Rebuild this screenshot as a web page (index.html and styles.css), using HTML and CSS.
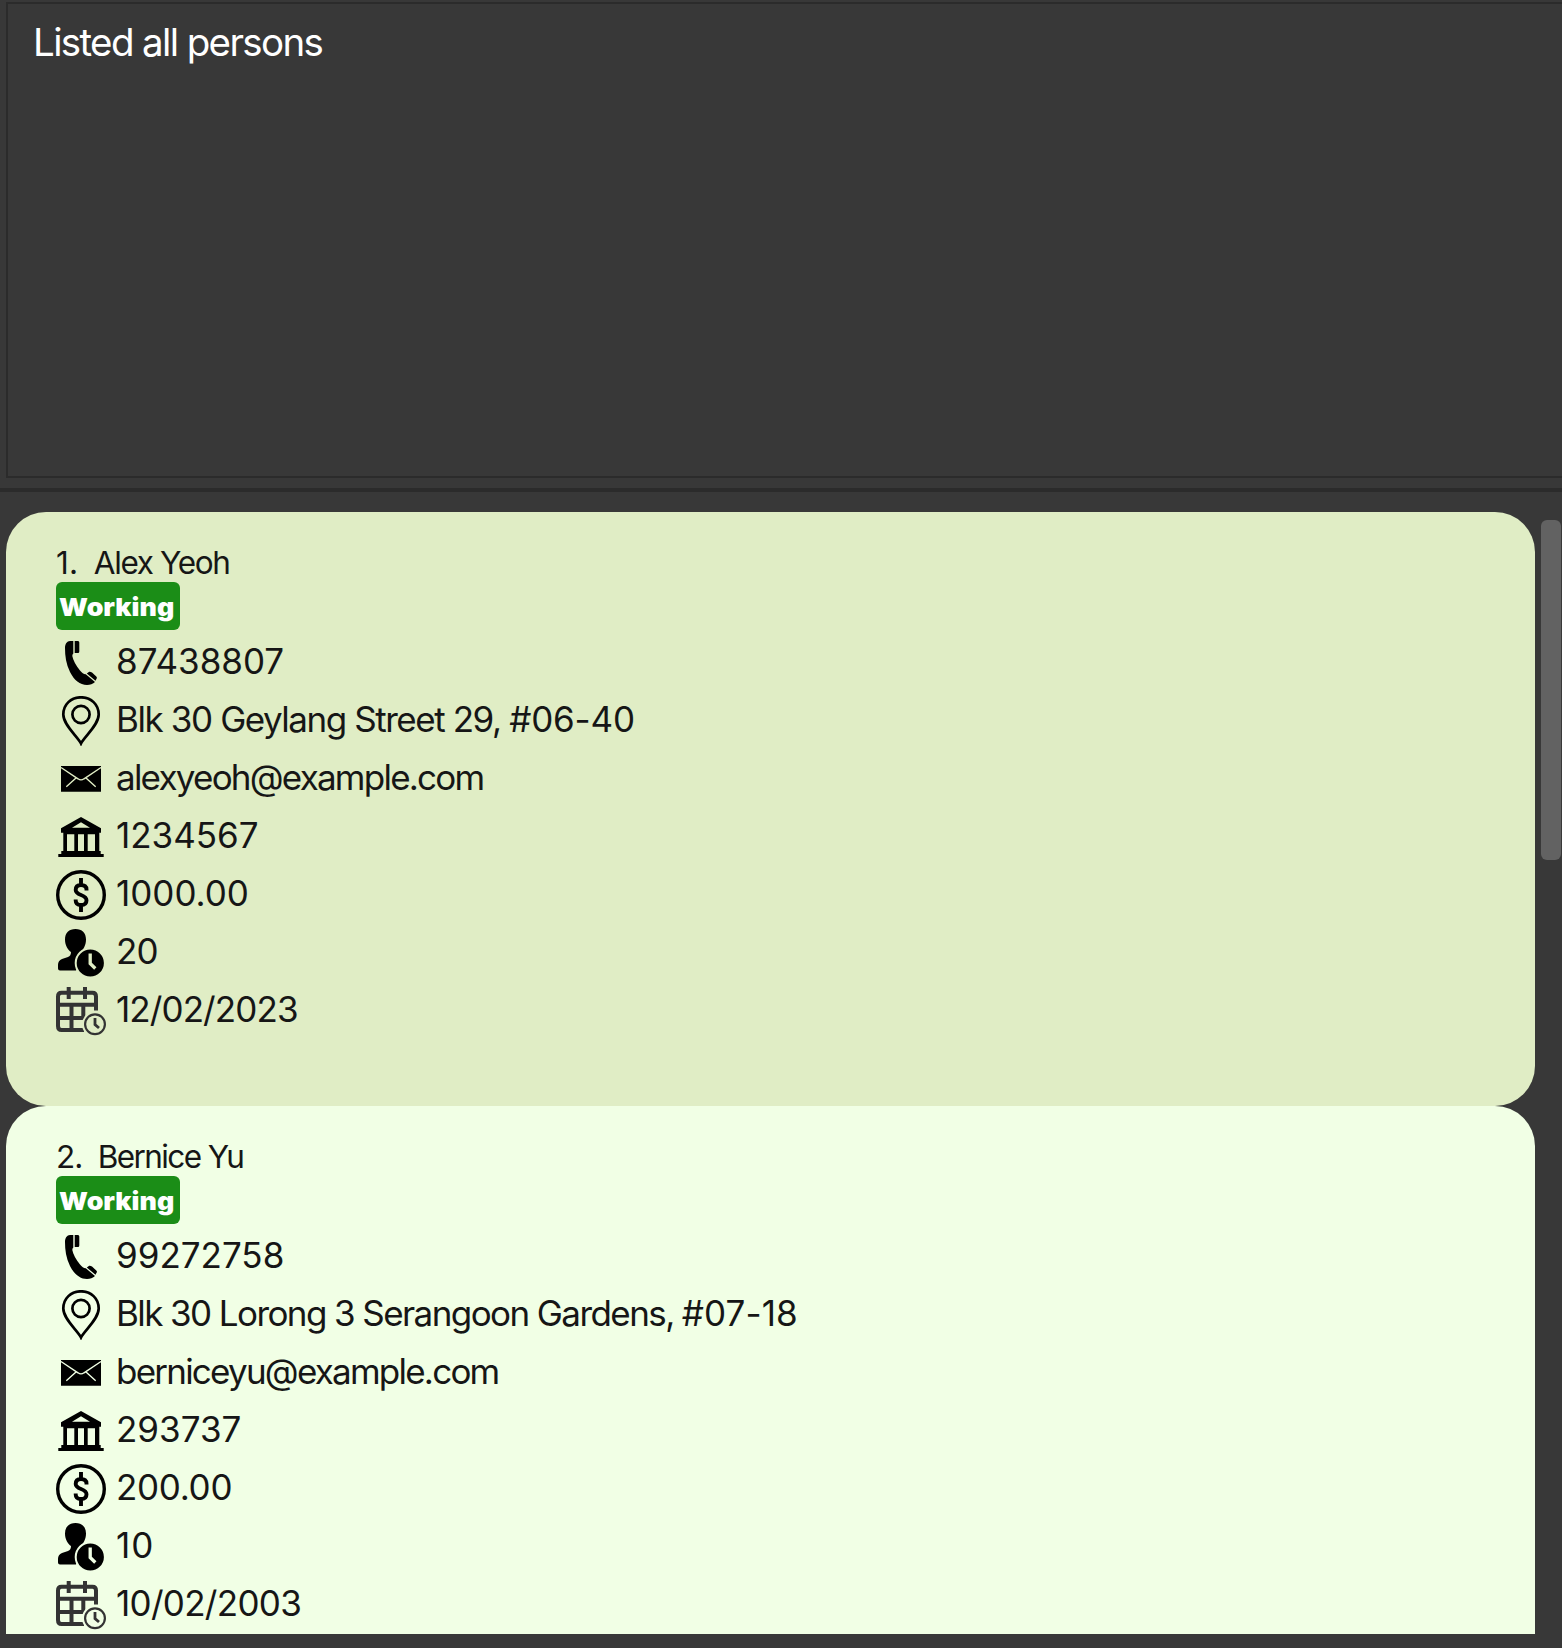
FILE: index.html
```html
<!DOCTYPE html>
<html lang="en">
<head>
<meta charset="utf-8">
<title>Persons</title>
<link rel="stylesheet" href="styles.css">
</head>
<body>
<svg class="sprite" width="0" height="0" aria-hidden="true">
  <symbol id="phone" viewBox="0 0 50 50">
    <path d="M17.3 3H14C11 3 9 6 9 10C9 18 10 26 14 34C18 42 24 47 31 47C34 47 37 46 39 44L29.800 36.300C28 36.500 26 35 24 32.500C20 27.500 17 22 16.300 18Q16.300 16 17.300 15.500Z"/>
    <path d="M18.700 3H22Q23.300 3 23.300 4.500V13.500Q23.300 15 22 15H18.700ZM30.800 35.500L33.200 33.800Q34.500 33.500 36 34.500L40.300 38.500Q41.300 39.500 40.700 40.500L39.500 42.800Z"/>
  </symbol>
  <symbol id="pin" viewBox="0 0 50 50">
    <g fill="none" stroke="#000" stroke-width="2.700">
      <path d="M25 47.500C22 41 7.300 29 7.300 18.500C7.300 8.500 15 1.300 25 1.300S42.700 8.500 42.700 18.500C42.700 29 28 41 25 47.500Z"/>
      <circle cx="25" cy="18.500" r="8.600"/>
    </g>
  </symbol>
  <symbol id="mail" viewBox="0 0 50 50">
    <path d="M5 12H45V37.700H5Z"/>
    <path d="M5 13.500L22 24.800Q25 27 28 24.800L45 13.500M10.300 32.700L20 24M39.700 32.700L30 24" fill="none" stroke="currentColor" stroke-width="1.400"/>
  </symbol>
  <symbol id="bank" viewBox="0 0 50 50">
    <path fill-rule="evenodd" d="M25 5L45 16.300V20.700H43.300V39H44.700V42H47.700V45H2.300V42H5.300V39H7.300V20.700H5V16.300ZM25 10.300L16 15.700H34ZM11 22.300V39H18.300V22.300ZM22 22.300V39H28V22.300ZM31.700 22.300V39H39V22.300Z"/>
  </symbol>
  <symbol id="dollar" viewBox="0 0 50 50">
    <g fill="none" stroke="#000">
      <circle cx="25" cy="25" r="23.300" stroke-width="3.400"/>
      <path d="M30.500 20.500V19.500C30.500 16.500 28.500 15 25 15S19.700 17 19.700 20C19.700 26 30.500 24 30.500 30.200C30.500 33.500 28.500 35 25 35S19.700 33.500 19.700 30.500V29.500M25 8V15M25 35V42" stroke-width="3.900"/>
    </g>
  </symbol>
  <symbol id="person" viewBox="0 0 50 50">
    <path d="M19.500 1C26 1 30 5 30 11.500C30 17.500 27 22 24.500 24V32L20 42.500H4Q2 42.500 2 40.500V37Q2 32.500 6 31L12 29Q15 28 15 24C12 22 9 17.500 9 11.500C9 5 13 1 19.500 1Z"/>
    <circle cx="34.300" cy="35" r="14.600" stroke="currentColor" stroke-width="2"/>
    <path d="M34.200 25.500V35.500L39.300 40.500" fill="none" stroke="currentColor" stroke-width="3.300"/>
  </symbol>
  <symbol id="calendar" viewBox="0 0 50 50">
    <g fill="none" stroke="#333">
      <path d="M40 24.500V10.500Q40 6.800 36.500 6.800H5.500Q2 6.800 2 10.500V40Q2 44 5.500 44H28M2 18.800H40M2 32H28M15.500 19V44M27.300 19V33" stroke-width="4"/>
      <path d="M12.700 1V13M29 1V13" stroke-width="4"/>
      <circle cx="39" cy="38.300" r="12" fill="currentColor" stroke="currentColor" stroke-width="2"/>
      <circle cx="39" cy="38.300" r="9.900" stroke-width="2.200"/>
      <path d="M39 32V38.500L43 42" stroke-width="2.800"/>
    </g>
  </symbol>
</svg>

<div class="result"><p class="result-text">Listed all persons</p></div>
<div class="divider"></div>

<main class="list">
  <div class="cards">
    <section class="card card-even">
      <h2 class="name"><span class="index">1.</span><span>Alex Yeoh</span></h2>
      <div class="tag"><span class="tag-label">Working</span></div>
      <ul class="fields">
        <li class="field"><svg class="icon"><use href="#phone"/></svg><span class="number">87438807</span></li>
        <li class="field"><svg class="icon"><use href="#pin"/></svg><span class="address">Blk 30 Geylang Street 29, <span class="unit">#06-40</span></span></li>
        <li class="field"><svg class="icon"><use href="#mail"/></svg><span class="email">alexyeoh@example.com</span></li>
        <li class="field"><svg class="icon"><use href="#bank"/></svg><span class="number">1234567</span></li>
        <li class="field"><svg class="icon"><use href="#dollar"/></svg><span class="number">1000.00</span></li>
        <li class="field"><svg class="icon"><use href="#person"/></svg><span class="hours">20</span></li>
        <li class="field"><svg class="icon"><use href="#calendar"/></svg><span class="date">12/02/2023</span></li>
      </ul>
    </section>
    <section class="card card-odd">
      <h2 class="name"><span class="index">2.</span><span>Bernice Yu</span></h2>
      <div class="tag"><span class="tag-label">Working</span></div>
      <ul class="fields">
        <li class="field"><svg class="icon"><use href="#phone"/></svg><span class="number">99272758</span></li>
        <li class="field"><svg class="icon"><use href="#pin"/></svg><span class="address">Blk 30 Lorong 3 Serangoon Gardens, <span class="unit">#07-18</span></span></li>
        <li class="field"><svg class="icon"><use href="#mail"/></svg><span class="email">berniceyu@example.com</span></li>
        <li class="field"><svg class="icon"><use href="#bank"/></svg><span class="number">293737</span></li>
        <li class="field"><svg class="icon"><use href="#dollar"/></svg><span class="salary">200.00</span></li>
        <li class="field"><svg class="icon"><use href="#person"/></svg><span class="hours">10</span></li>
        <li class="field"><svg class="icon"><use href="#calendar"/></svg><span class="date">10/02/2003</span></li>
      </ul>
    </section>
  </div>
  <div class="scroll-thumb"></div>
</main>
</body>
</html>
```
FILE: styles.css
```css
* { box-sizing: border-box; }

body {
  margin: 0;
  height: 1648px;
  overflow: hidden;
  display: flex;
  flex-direction: column;
  background: #383838;
  color: #161616;
  font-family: Inter, "Liberation Sans", sans-serif;
}

.sprite { display: none; }

.result {
  flex: none;
  height: 476px;
  margin: 2px 0 0 6px;
  border: 2px solid #2b2b2b;
  border-right: 0;
  padding: 14px 0 0 25px;
}

.result-text {
  margin: 0;
  color: #fff;
  font-size: 38.500px;
  line-height: 48px;
  letter-spacing: -1.630px;
}

.divider {
  flex: none;
  height: 4px;
  margin-top: 10px;
  background: #2b2b2b;
}

.list {
  flex: none;
  display: flex;
  height: 1142px;
  padding: 20px 1px 0 6px;
  gap: 6px;
}

.cards { flex: 1; overflow: hidden; }

.card {
  height: 594px;
  padding: 32px 50px 0;
  border-radius: 40px;
}

.card-even { background: #e0edc5; }
.card-odd { background: #f1ffe5; }

.name {
  display: flex;
  gap: 15.500px;
  height: 38px;
  margin: 0;
  font-size: 31.500px;
  font-weight: 400;
  line-height: 37px;
  letter-spacing: -1.600px;
}

.card-even .name { letter-spacing: -1.350px; }
.index { letter-spacing: -1px; }
.card-even .index { letter-spacing: 0.200px; }

.tag {
  width: 124px;
  height: 48px;
  padding-left: 3px;
  border-radius: 6px;
  background: #1b8d17;
  color: #fff;
  font-size: 25px;
  font-weight: 900;
  line-height: 50px;
}

.tag-label {
  display: inline-block;
  transform: scaleX(1.070);
  transform-origin: left;
}

.fields {
  display: grid;
  gap: 8px;
  margin: 8px 0 0;
  padding: 0;
  list-style: none;
}

.field {
  display: flex;
  gap: 10px;
  height: 50px;
  font-size: 35px;
  line-height: 46px;
  white-space: nowrap;
}

.number { letter-spacing: 0; }
.salary { letter-spacing: -0.300px; }
.hours { letter-spacing: -0.800px; }
.card-odd .hours { letter-spacing: 1px; }
.date { letter-spacing: -0.900px; }
.card-odd .date { letter-spacing: -0.700px; }
.email { letter-spacing: -1.770px; }
.address { letter-spacing: -1.500px; word-spacing: 0.350px; }
.card-odd .address { letter-spacing: -1.570px; word-spacing: -0.100px; }
.address .unit { letter-spacing: -0.200px; }
.card-odd .address .unit { letter-spacing: 0.100px; }

.icon { width: 50px; height: 50px; flex: none; }
.card-even .icon { color: #e0edc5; }
.card-odd .icon { color: #f1ffe5; }

.scroll-thumb {
  width: 20px;
  height: 340px;
  margin-top: 8px;
  border-radius: 6px;
  background: #626262;
}
```
